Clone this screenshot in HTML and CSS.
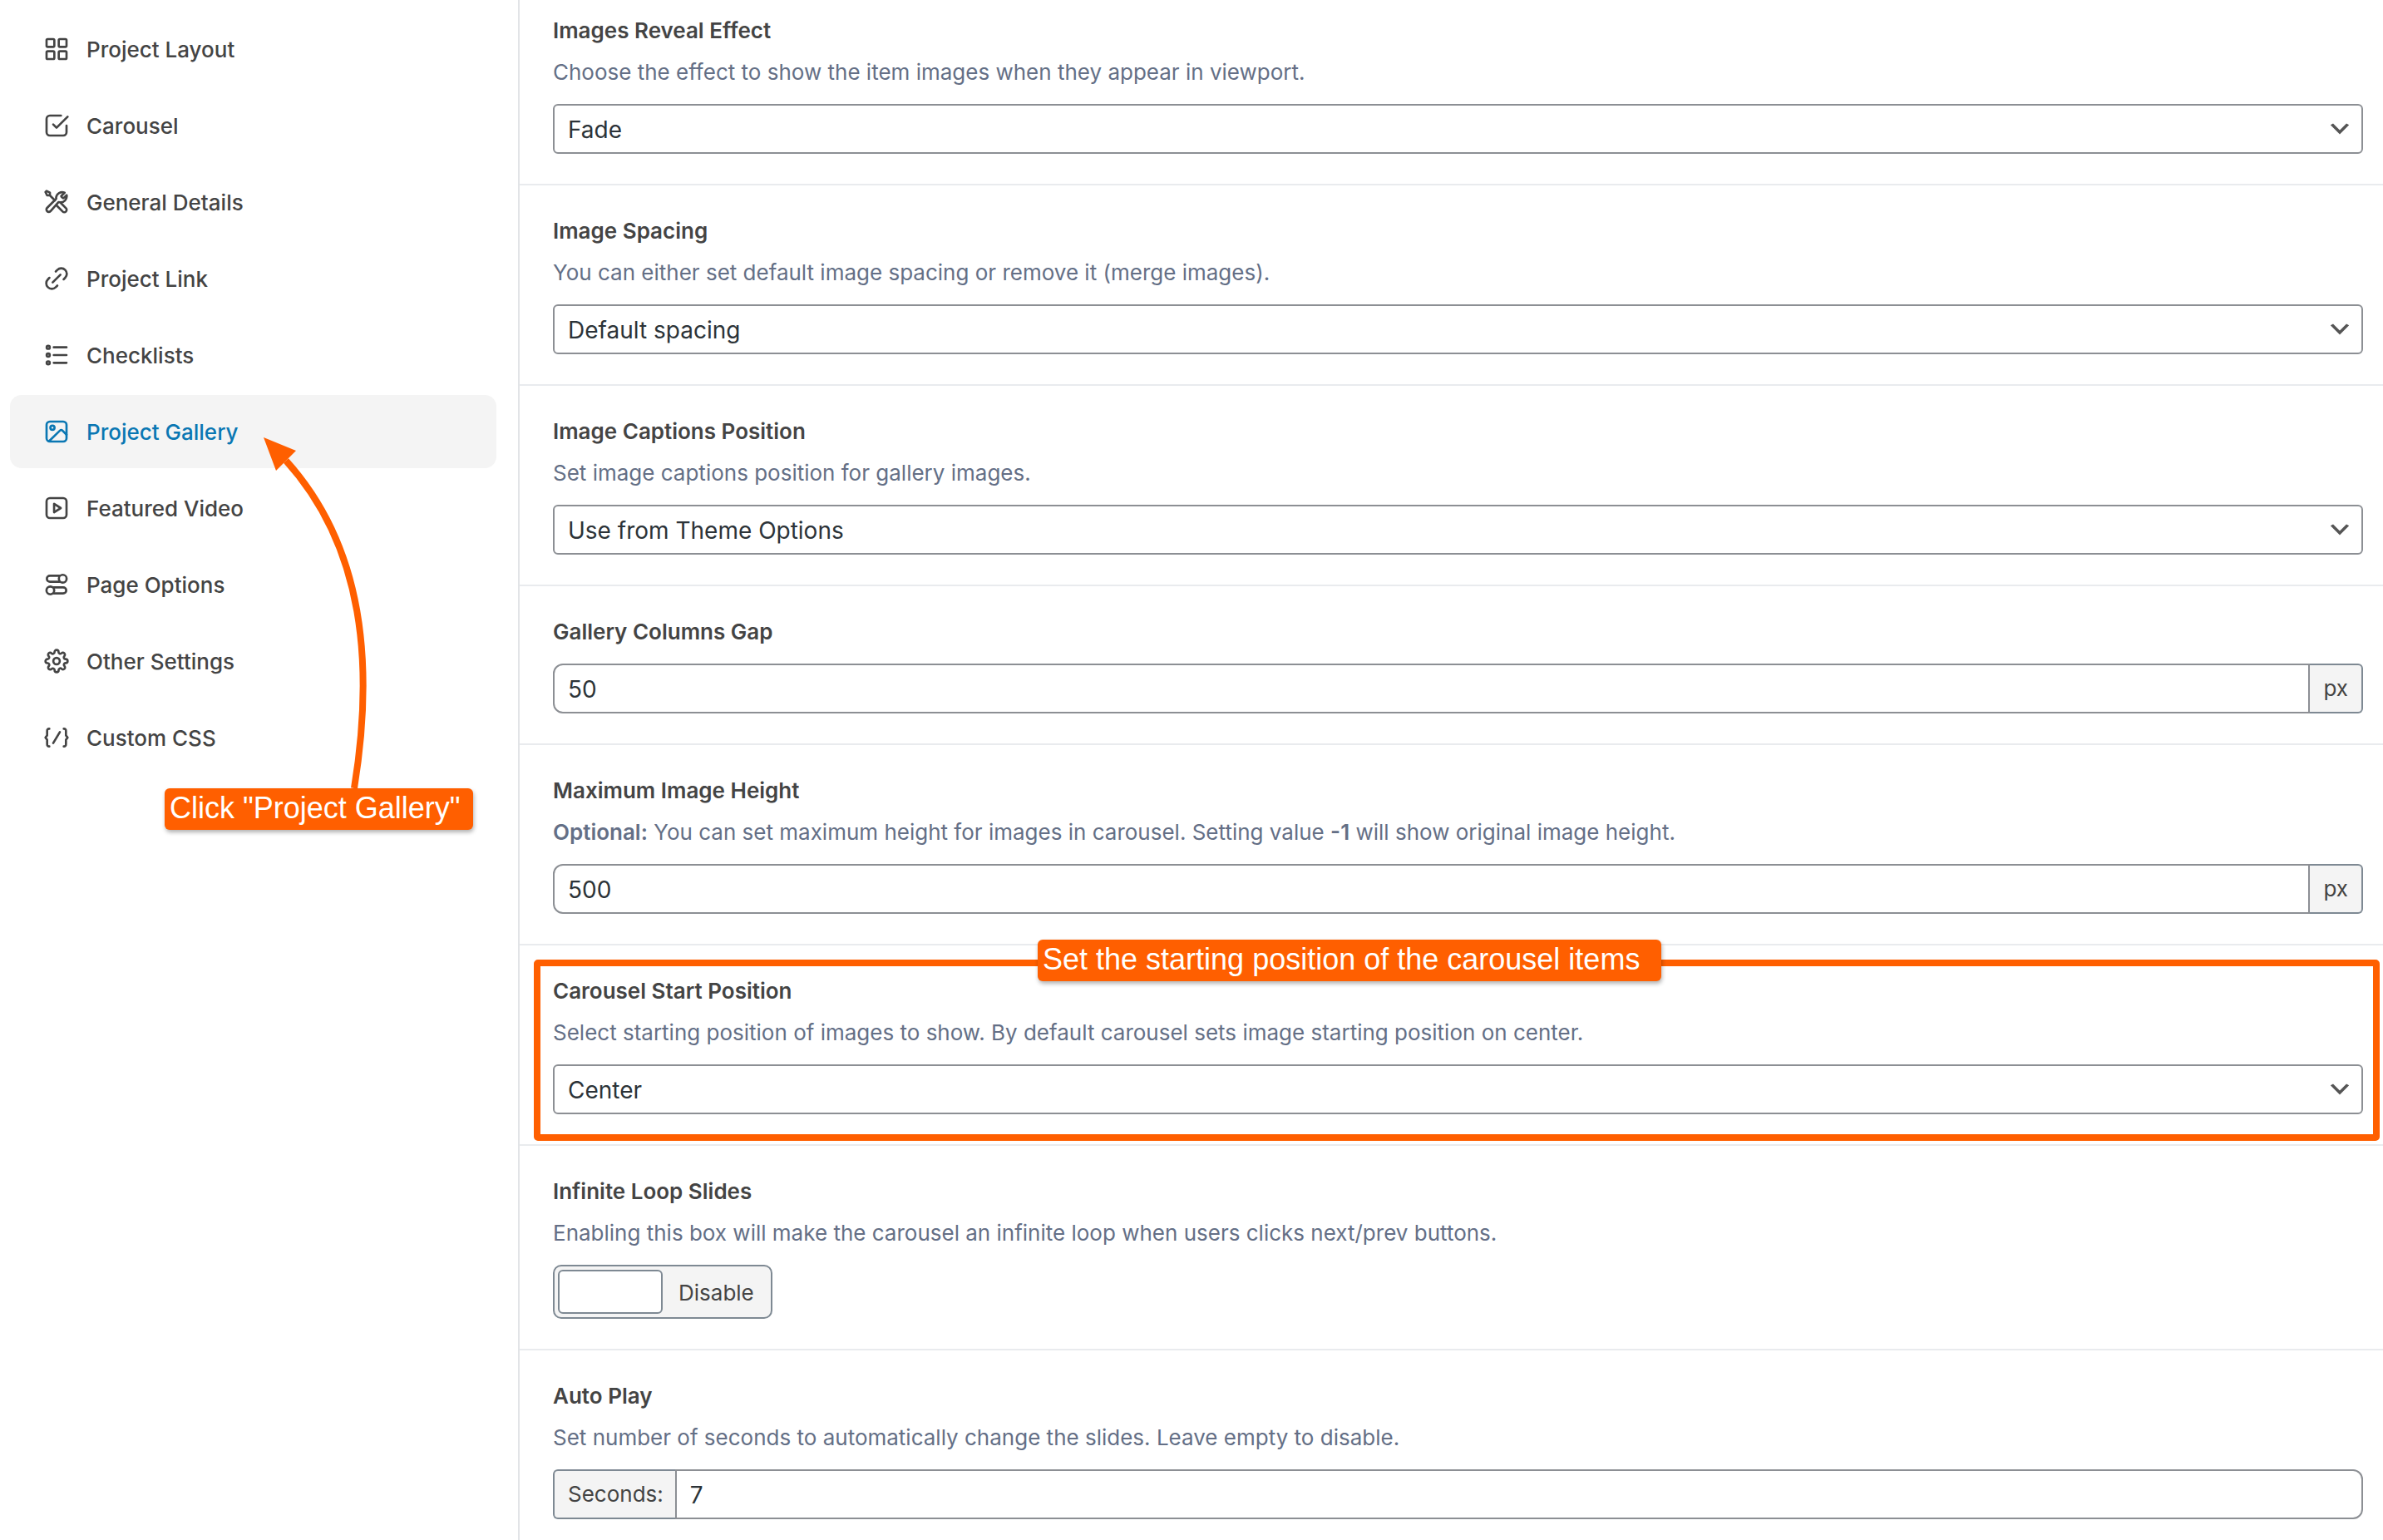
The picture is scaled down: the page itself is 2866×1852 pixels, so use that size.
FILE: index.html
```html
<!DOCTYPE html>
<html lang="en">
<head>
<meta charset="utf-8">
<title>Project Gallery</title>
<link rel="stylesheet" href="styles.css">
</head>
<body>
<div class="settings">
  <nav class="sidebar" aria-label="Settings sections">
    <a class="tab" href="#layout"><svg class="icon" viewBox="0 0 24 24"><rect x="3" y="3" width="7" height="7" rx="1"/><rect x="14" y="3" width="7" height="7" rx="1"/><rect x="3" y="14" width="7" height="7" rx="1"/><rect x="14" y="14" width="7" height="7" rx="1"/></svg><span class="tab-text">Project Layout</span></a>
    <a class="tab" href="#carousel"><svg class="icon" viewBox="0 0 24 24"><path d="M16 3H6a3 3 0 0 0-3 3v12a3 3 0 0 0 3 3h12a3 3 0 0 0 3-3v-6"/><path d="M9 11l3 3L22 4"/></svg><span class="tab-text">Carousel</span></a>
    <a class="tab" href="#general"><svg class="icon" viewBox="0 0 24 24"><path d="M6 6l4.500 4.500M6 6H3.500L2 3l1-1 3 1.500V6z"/><path d="M19.259 2.741l-2.630 2.630c-.198.198-.297.297-.334.411a.6.6 0 0 0 0 .371c.037.114.136.213.334.411l.807.807c.198.198.297.297.411.334a.6.6 0 0 0 .371 0c.114-.037.213-.136.411-.334l2.459-2.459A5.500 5.500 0 0 1 14.920 11.400c-.450-.090-.670-.130-.810-.120-.145.015-.217.036-.345.105-.134.071-.268.206-.538.475L6.500 19.500a2.121 2.121 0 0 1-3-3l7.641-7.727c.269-.270.404-.404.475-.538.069-.128.090-.200.105-.345.010-.140-.030-.360-.120-.810a5.500 5.500 0 0 1 7.658-4.339z" transform="translate(0 .8)"/><path d="M12 15l5.500 5.500a2.121 2.121 0 0 0 3-3l-4.525-4.524"/></svg><span class="tab-text">General Details</span></a>
    <a class="tab" href="#link"><svg class="icon" viewBox="0 0 24 24"><path d="M12.700 18.400l-1.400 1.400A5 5 0 0 1 4.200 12.700l1.400-1.400M18.400 12.700l1.400-1.400a5 5 0 0 0-7.100-7.100l-1.400 1.400M8.500 15.500l7-7"/></svg><span class="tab-text">Project Link</span></a>
    <a class="tab" href="#checklists"><svg class="icon" viewBox="0 0 24 24"><path d="M21 12H9.500M21 5H9.500M21 19H9.500"/><circle cx="4.500" cy="5" r="1.400"/><circle cx="4.500" cy="12" r="1.400"/><circle cx="4.500" cy="19" r="1.400"/></svg><span class="tab-text">Checklists</span></a>
    <a class="tab tab-active" href="#gallery" aria-current="page"><svg class="icon" viewBox="0 0 24 24"><rect x="3" y="3" width="18" height="18" rx="3"/><circle cx="8.300" cy="8.500" r="1.900"/><path d="M5.300 20.600L15.200 11a1.400 1.400 0 0 1 2 0l3.800 3.800"/></svg><span class="tab-text">Project Gallery</span></a>
    <a class="tab" href="#video"><svg class="icon" viewBox="0 0 24 24"><rect x="3" y="3" width="18" height="18" rx="3"/><path d="M9.800 8.200v7.600l6-3.800z"/></svg><span class="tab-text">Featured Video</span></a>
    <a class="tab" href="#page"><svg class="icon" viewBox="0 0 24 24"><path d="M14.500 4H6a2.700 2.700 0 0 0 0 5.500h8.500M9.500 14.500H18a2.700 2.700 0 0 1 0 5.500H9.500"/><circle cx="17.600" cy="6.700" r="3.500"/><circle cx="6.400" cy="17.300" r="3.500"/></svg><span class="tab-text">Page Options</span></a>
    <a class="tab" href="#other"><svg class="icon" viewBox="0 0 24 24"><g transform="translate(1.100 1.100) scale(.909)" stroke-width="2.200"><circle cx="12" cy="12" r="3.200"/><path d="M19.400 15a1.650 1.650 0 0 0 .33 1.820l.06.06a2 2 0 0 1 0 2.830 2 2 0 0 1-2.830 0l-.06-.06a1.650 1.650 0 0 0-1.820-.33 1.650 1.650 0 0 0-1 1.510V21a2 2 0 0 1-2 2 2 2 0 0 1-2-2v-.09A1.650 1.650 0 0 0 9 19.400a1.650 1.650 0 0 0-1.820.33l-.06.06a2 2 0 0 1-2.830 0 2 2 0 0 1 0-2.830l.06-.06a1.650 1.650 0 0 0 .33-1.820 1.650 1.650 0 0 0-1.510-1H3a2 2 0 0 1-2-2 2 2 0 0 1 2-2h.09A1.650 1.650 0 0 0 4.600 9a1.650 1.650 0 0 0-.33-1.820l-.06-.06a2 2 0 0 1 0-2.830 2 2 0 0 1 2.830 0l.06.06a1.650 1.650 0 0 0 1.820.33H9a1.650 1.650 0 0 0 1-1.510V3a2 2 0 0 1 2-2 2 2 0 0 1 2 2v.09a1.650 1.650 0 0 0 1 1.510 1.650 1.650 0 0 0 1.820-.33l.06-.06a2 2 0 0 1 2.830 0 2 2 0 0 1 0 2.830l-.06.06a1.650 1.650 0 0 0-.33 1.820V9a1.650 1.650 0 0 0 1.510 1H21a2 2 0 0 1 2 2 2 2 0 0 1-2 2h-.09a1.650 1.650 0 0 0-1.510 1z"/></g></svg><span class="tab-text">Other Settings</span></a>
    <a class="tab" href="#css"><svg class="icon" viewBox="0 0 24 24"><path d="M5.500 4A1.800 1.800 0 0 0 3.500 6v4L2 12l1.500 2v4a1.800 1.800 0 0 0 2 2M18.500 4a1.800 1.800 0 0 1 2 2v4l1.500 2-1.500 2v4a1.800 1.800 0 0 1-2 2M15 7l-6 10"/></svg><span class="tab-text">Custom CSS</span></a>
  </nav>

  <main class="fields">
    <section class="field">
      <label class="title" for="reveal">Images Reveal Effect</label>
      <p class="description">Choose the effect to show the item images when they appear in viewport.</p>
      <div class="control"><select id="reveal" class="select"><option>Fade</option></select></div>
    </section>
    <section class="field">
      <label class="title" for="spacing">Image Spacing</label>
      <p class="description">You can either set default image spacing or remove it (merge images).</p>
      <div class="control"><select id="spacing" class="select"><option>Default spacing</option></select></div>
    </section>
    <section class="field">
      <label class="title" for="captions">Image Captions Position</label>
      <p class="description">Set image captions position for gallery images.</p>
      <div class="control"><select id="captions" class="select"><option>Use from Theme Options</option></select></div>
    </section>
    <section class="field">
      <label class="title" for="gap">Gallery Columns Gap</label>
      <div class="control"><input id="gap" class="input has-append" type="text" value="50"><span class="addon append">px</span></div>
    </section>
    <section class="field">
      <label class="title" for="height">Maximum Image Height</label>
      <p class="description"><strong>Optional:</strong> You can set maximum height for images in carousel. Setting value <strong>-1</strong> will show original image height.</p>
      <div class="control"><input id="height" class="input has-append" type="text" value="500"><span class="addon append">px</span></div>
    </section>
    <section class="field highlighted">
      <label class="title" for="start">Carousel Start Position</label>
      <p class="description">Select starting position of images to show. By default carousel sets image starting position on center.</p>
      <div class="control"><select id="start" class="select"><option>Center</option></select></div>
      <div class="frame"></div>
      <div class="callout callout-frame">Set the starting position of the carousel items</div>
    </section>
    <section class="field">
      <span class="title" id="loop-title">Infinite Loop Slides</span>
      <p class="description">Enabling this box will make the carousel an infinite loop when users clicks next/prev buttons.</p>
      <button class="toggle" type="button" role="switch" aria-checked="false" aria-labelledby="loop-title"><span class="knob"></span><span class="toggle-text">Disable</span></button>
    </section>
    <section class="field">
      <label class="title" for="autoplay">Auto Play</label>
      <p class="description">Set number of seconds to automatically change the slides. Leave empty to disable.</p>
      <div class="control"><span class="addon prepend">Seconds:</span><input id="autoplay" class="input has-prepend" type="text" value="7"></div>
    </section>
  </main>

  <svg class="arrow" viewBox="0 0 130 430" aria-hidden="true"><path class="arrow-line" d="M113 428C137 280 125 138 31 34"/><path class="arrow-head" d="M4 6l39 16-24 24z"/></svg>
  <div class="callout callout-tab">Click "Project Gallery"</div>
</div>
</body>
</html>
```
FILE: styles.css
```css
* {
  box-sizing: border-box;
}

body {
  margin: 0;
  background: #fff;
  color: #444;
  font: 400 26px/38px Inter, "Liberation Sans", sans-serif;
}

.settings {
  position: relative;
  display: flex;
  min-height: 100vh;
}

.sidebar {
  display: flex;
  flex: 0 0 625px;
  flex-direction: column;
  gap: 4px;
  padding: 15px 26px 15px 12px;
  border-right: 2px solid #e2e4e7;
}

.tab {
  display: flex;
  align-items: center;
  gap: 20px;
  height: 88px;
  padding: 0 40px;
  border-radius: 14px;
  color: #444;
  font-weight: 500;
  text-decoration: none;
}

.tab-active {
  background: #f4f4f4;
  color: #0a77b3;
}

.tab-text {
  padding-top: 2px;
}

.icon {
  width: 32px;
  height: 32px;
  fill: none;
  stroke: currentColor;
  stroke-width: 2;
  stroke-linecap: round;
  stroke-linejoin: round;
}

.fields {
  flex: 1;
  min-width: 0;
}

.field {
  display: flex;
  flex-direction: column;
  align-items: flex-start;
  padding: 36px 24px 36px 40px;
  border-bottom: 2px solid #e9ebee;
}

.field:first-child {
  padding-top: 18px;
}

.field:last-child {
  padding-bottom: 24px;
  border-bottom: 0;
}

.title {
  font-weight: 600;
}

.description {
  margin: 12px 0 0;
  color: #646f86;
}

.description strong {
  font-weight: 600;
}

.control {
  display: flex;
  width: 100%;
  height: 60px;
  margin-top: 19px;
}

.select,
.input {
  flex: 1;
  min-width: 0;
  margin: 0;
  padding: 2px 16px 0;
  border: 2px solid #8c8f94;
  background: #fff;
  color: #2c3338;
  font: 400 28px/36px Inter, "Liberation Sans", sans-serif;
}

.select {
  appearance: none;
  border-radius: 6px;
  background: #fff url("data:image/svg+xml,%3Csvg xmlns='http://www.w3.org/2000/svg' viewBox='0 0 20 20'%3E%3Cpath d='M5 6l5 5 5-5 2 1-7 7-7-7 2-1z' fill='%23555'/%3E%3C/svg%3E") no-repeat right 10px center / 32px;
}

.input {
  border-radius: 12px;
}

.has-append {
  border-top-right-radius: 0;
  border-bottom-right-radius: 0;
}

.has-prepend {
  border-top-left-radius: 0;
  border-bottom-left-radius: 0;
}

.addon {
  display: flex;
  align-items: center;
  padding: 0 16px;
  border: 2px solid #7e8993;
  background: #f4f4f4;
}

.append {
  border-left: 0;
  border-radius: 0 6px 6px 0;
}

.prepend {
  padding-right: 14px;
  border-right: 0;
  border-radius: 6px 0 0 6px;
}

.toggle {
  display: flex;
  align-items: center;
  height: 65px;
  margin: 19px 0 0;
  padding: 0 20px 0 4px;
  border: 2px solid #7e8993;
  border-radius: 10px;
  background: #f4f4f4;
  color: #444;
  font: inherit;
}

.knob {
  width: 126px;
  height: 53px;
  border: 2px solid #7e8993;
  border-radius: 6px;
  background: #fff;
}

.toggle-text {
  padding: 2px 0 0 19px;
}

.highlighted {
  position: relative;
}

.frame {
  position: absolute;
  inset: 17px 4px 4px 17px;
  border: 8px solid #ff5f00;
  border-radius: 5px;
  pointer-events: none;
}

.callout {
  position: absolute;
  height: 50px;
  padding: 0 26px 0 6px;
  border-radius: 6px;
  background: #ff5f00;
  box-shadow: 1px 3px 5px rgba(0, 0, 0, 0.3);
  color: #fff;
  font: 400 36px/48px "Liberation Sans", Arial, sans-serif;
  white-space: nowrap;
}

.callout-frame {
  top: -7px;
  left: 623px;
}

.callout-tab {
  top: 948px;
  left: 198px;
  padding-right: 15px;
}

.arrow {
  position: absolute;
  top: 520px;
  left: 313px;
  width: 130px;
  height: 430px;
}

.arrow-line {
  fill: none;
  stroke: #ff5f00;
  stroke-width: 8;
}

.arrow-head {
  fill: #ff5f00;
}
```
